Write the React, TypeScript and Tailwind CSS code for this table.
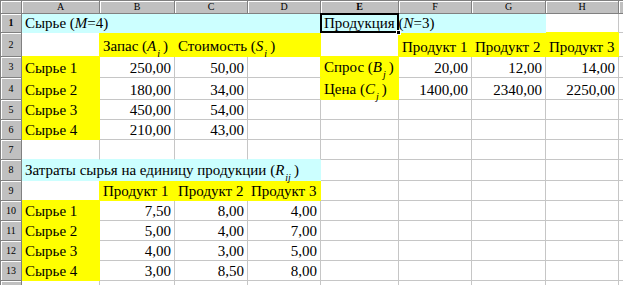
import type { ReactNode } from "react";

type Fill = "y" | "c" | undefined;
type Cell = { f?: Fill; v?: ReactNode; r?: boolean; sel?: boolean };

const Sub = ({ children }: { children: ReactNode }) => (
  <sub className="ml-px mr-[3px] align-[-3px] text-[10px] italic leading-none">{children}</sub>
);

const cols = ["A", "B", "C", "D", "E", "F", "G", "H", ""];
const E: Cell = {};

const rows: Cell[][] = [
  [
    { f: "c", v: <>Сырье (<i>M</i>=4)</> },
    { f: "c" },
    { f: "c" },
    { f: "c" },
    { f: "c", sel: true, v: <>Продукция (<i>N</i>=3)</> },
    { f: "c" },
    { f: "c" },
    E,
    E,
  ],
  [
    E,
    { f: "y", v: <>Запас (<i>A</i><Sub>i</Sub>)</> },
    { f: "y", v: <>Стоимость (<i>S</i><Sub>i</Sub>)</> },
    { f: "y" },
    E,
    { f: "y", v: "Продукт 1" },
    { f: "y", v: "Продукт 2" },
    { f: "y", v: "Продукт 3" },
    E,
  ],
  [
    { f: "y", v: "Сырье 1" },
    { v: "250,00", r: true },
    { v: "50,00", r: true },
    E,
    { f: "y", v: <>Спрос (<i>B</i><Sub>j</Sub>)</> },
    { v: "20,00", r: true },
    { v: "12,00", r: true },
    { v: "14,00", r: true },
    E,
  ],
  [
    { f: "y", v: "Сырье 2" },
    { v: "180,00", r: true },
    { v: "34,00", r: true },
    E,
    { f: "y", v: <>Цена (<i>C</i><Sub>j</Sub>)</> },
    { v: "1400,00", r: true },
    { v: "2340,00", r: true },
    { v: "2250,00", r: true },
    E,
  ],
  [{ f: "y", v: "Сырье 3" }, { v: "450,00", r: true }, { v: "54,00", r: true }, E, E, E, E, E, E],
  [{ f: "y", v: "Сырье 4" }, { v: "210,00", r: true }, { v: "43,00", r: true }, E, E, E, E, E, E],
  [E, E, E, E, E, E, E, E, E],
  [
    { f: "c", v: <>Затраты сырья на единицу продукции (<i>R</i><Sub>ij</Sub>)</> },
    { f: "c" },
    { f: "c" },
    { f: "c" },
    E,
    E,
    E,
    E,
    E,
  ],
  [E, { f: "y", v: "Продукт 1" }, { f: "y", v: "Продукт 2" }, { f: "y", v: "Продукт 3" }, E, E, E, E, E],
  [{ f: "y", v: "Сырье 1" }, { v: "7,50", r: true }, { v: "8,00", r: true }, { v: "4,00", r: true }, E, E, E, E, E],
  [{ f: "y", v: "Сырье 2" }, { v: "5,00", r: true }, { v: "4,00", r: true }, { v: "7,00", r: true }, E, E, E, E, E],
  [{ f: "y", v: "Сырье 3" }, { v: "4,00", r: true }, { v: "3,00", r: true }, { v: "5,00", r: true }, E, E, E, E, E],
  [{ f: "y", v: "Сырье 4" }, { v: "3,00", r: true }, { v: "8,50", r: true }, { v: "8,00", r: true }, E, E, E, E, E],
  [E, E, E, E, E, E, E, E, E],
];

const bgClass = { y: "bg-[#ffff00]", c: "bg-[#ccffff]" };
const rightClass = { y: "border-r-[#ffff00]", c: "border-r-[#ccffff]", g: "border-r-[#c6c6c6]" };
const bottomClass = { y: "border-b-[#ffff00]", c: "border-b-[#ccffff]", g: "border-b-[#c6c6c6]" };

function DataCell({ ri, ci }: { ri: number; ci: number }) {
  const cell = rows[ri][ci];
  const right = rows[ri][ci + 1];
  const below = rows[ri + 1]?.[ci];
  const rc = cell.f ?? right?.f ?? "g";
  const bc = cell.f ?? below?.f ?? "g";
  return (
    <div
      className={`relative flex items-end whitespace-nowrap border-r border-b px-[3px] ${rightClass[rc]} ${bottomClass[bc]} ${
        cell.f ? bgClass[cell.f] : ""
      } ${cell.r ? "justify-end" : "justify-start"}`}
    >
      {cell.v !== undefined && <span className="relative z-10 leading-[17px]">{cell.v}</span>}
      {/* active cell frame + fill handle */}
      {cell.sel && (
        <div className="pointer-events-none absolute inset-[-1px] z-20 border-2 border-black">
          <div className="absolute right-[-4px] bottom-[-4px] h-[5px] w-[5px] border border-white bg-black" />
        </div>
      )}
    </div>
  );
}

export default function App() {
  return (
    <div className="h-[285px] w-[623px] overflow-hidden bg-white font-['Liberation_Serif','Times_New_Roman',serif] text-[15px] text-black">
      <div className="grid grid-cols-[22px_78px_75px_73px_73px_78px_73px_74px_73px_1fr] grid-rows-[14px_19px_24px_21px_22px_20px_20px_20px_21px_20px_20px_20px_20px_20px_20px]">
        {/* column headers */}
        <div className="border-r border-b border-t border-l border-[#808080] bg-[#c0c0c0] shadow-[inset_1px_1px_0_#fff]" />
        {cols.map((c, i) => (
          <div
            key={c + i}
            className={`flex items-center justify-center border-t border-r border-b border-[#808080] bg-[#c0c0c0] text-[10px] leading-none shadow-[inset_1px_1px_0_#fff] ${
              c === "E" ? "font-bold" : ""
            }`}
          >
            {c}
          </div>
        ))}
        {rows.map((row, ri) => (
          <>
            <div
              key={"h" + ri}
              className={`flex items-center justify-center border-l border-r border-b border-[#808080] bg-[#c0c0c0] text-[10px] leading-none shadow-[inset_1px_1px_0_#fff] ${
                ri === 0 ? "font-bold" : ""
              }`}
            >
              {ri < 13 ? ri + 1 : ""}
            </div>
            {row.map((_, ci) => (
              <DataCell key={ri + "-" + ci} ri={ri} ci={ci} />
            ))}
          </>
        ))}
      </div>
    </div>
  );
}
